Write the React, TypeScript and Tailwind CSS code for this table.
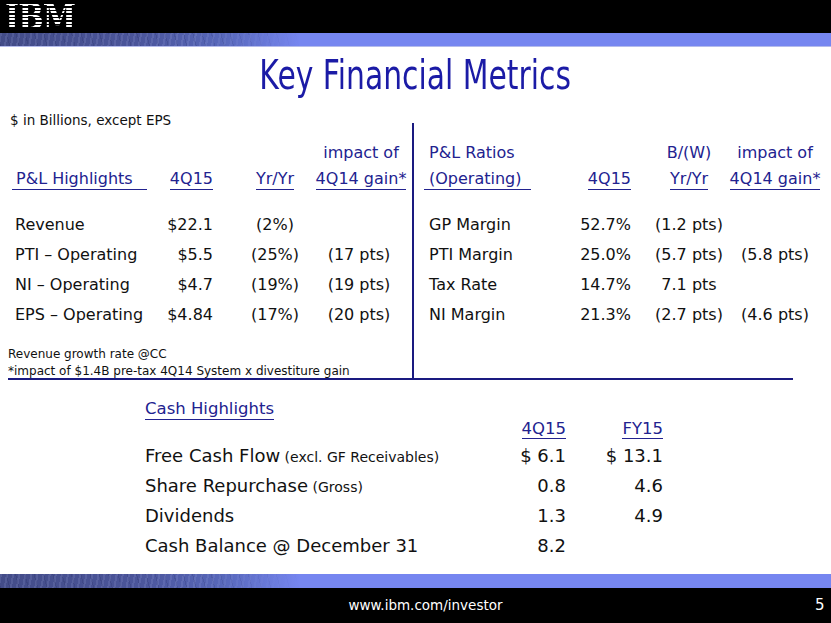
const font = { fontFamily: '"DejaVu Sans", Verdana, sans-serif' };

const plRows = [
  ["Revenue", "$22.1", "(2%)", ""],
  ["PTI \u2013 Operating", "$5.5", "(25%)", "(17 pts)"],
  ["NI \u2013 Operating", "$4.7", "(19%)", "(19 pts)"],
  ["EPS \u2013 Operating", "$4.84", "(17%)", "(20 pts)"],
];

const ratioRows = [
  ["GP Margin", "52.7%", "(1.2 pts)", ""],
  ["PTI Margin", "25.0%", "(5.7 pts)", "(5.8 pts)"],
  ["Tax Rate", "14.7%", "7.1 pts", ""],
  ["NI Margin", "21.3%", "(2.7 pts)", "(4.6 pts)"],
];

const cashRows: [string, string, string, string][] = [
  ["Free Cash Flow", "(excl. GF Receivables)", "$ 6.1", "$ 13.1"],
  ["Share Repurchase", "(Gross)", "0.8", "4.6"],
  ["Dividends", "", "1.3", "4.9"],
  ["Cash Balance @ December 31", "", "8.2", ""],
];

// blue band under the header and above the footer
const Band = ({ top }: { top?: boolean }) => (
  <div className={`h-[14px] shrink-0 flex bg-[#7686f0] ${top ? "border-b border-[#b4bbec]" : ""}`}>
    <div className="w-[300px] h-full bg-[linear-gradient(to_right,#434c88_0%,#4b559a_45%,#5868bb_75%,#7686f0_100%)]">
      <div className="w-full h-full [mask-image:linear-gradient(to_right,black_0%,black_65%,transparent_100%)] bg-[repeating-linear-gradient(100deg,rgba(200,208,255,0.12)_0px,rgba(200,208,255,0.12)_2px,transparent_2px,transparent_6px),repeating-linear-gradient(75deg,rgba(20,25,70,0.15)_0px,rgba(20,25,70,0.15)_1px,transparent_1px,transparent_9px)]"></div>
    </div>
  </div>
);

const u = "inline-block leading-[20px] border-b border-[#22228f]";

const App = () => {
  return (
    <div className="w-[831px] h-[623px] bg-white flex flex-col overflow-hidden text-[#111]" style={font}>
      {/* header */}
      <div className="h-[33px] bg-black pl-[5px] shrink-0 flex items-center">
        <span
          className="block origin-left scale-x-[0.86] text-[35px] leading-[31px] font-bold tracking-[-1px] text-transparent bg-clip-text bg-[repeating-linear-gradient(to_bottom,#fff_0px,#fff_2px,#000_2px,#000_3.5px)]"
          style={{ fontFamily: '"DejaVu Serif", "Liberation Serif", serif' }}
        >
          IBM
        </span>
      </div>
      <Band top />

      <div className="flex-1 flex flex-col">
        <div className="mt-[4px] h-[48px] flex justify-center">
          <h1 className="text-[40px] leading-[48px] text-[#1b1ba6] scale-x-[0.745] whitespace-nowrap">
            Key Financial Metrics
          </h1>
        </div>
        <div className="mt-[12px] mb-[-6px] pl-[10px] text-[13.5px] leading-[18px]">$ in Billions, except EPS</div>

        {/* tables */}
        <div className="flex h-[255px] text-[16px]">
          <div className="w-[414px] border-r-2 border-[#1a1a80] pl-[15px] pt-[18px]">
            <div className="grid grid-cols-[140px_58px_100px_96px] h-[24px] leading-[24px] text-[#22228f]">
              <div></div>
              <div></div>
              <div></div>
              <div className="text-center">impact of</div>
            </div>
            <div className="grid grid-cols-[140px_58px_100px_96px] h-[24px] pt-[2px] text-[#22228f]">
              <div>
                <span className={`${u} ml-[-3px] pl-[4px] pr-[14px]`}>P&amp;L Highlights</span>
              </div>
              <div className="text-right">
                <span className={u}>4Q15</span>
              </div>
              <div className="text-center pl-[24px]">
                <span className={u}>Yr/Yr</span>
              </div>
              <div className="text-center">
                <span className={u}>4Q14 gain*</span>
              </div>
            </div>
            <div className="mt-[21px]">
              {plRows.map((r) => (
                <div key={r[0]} className="grid grid-cols-[140px_58px_100px_96px] h-[30px] leading-[30px]">
                  <div className="whitespace-nowrap">{r[0]}</div>
                  <div className="text-right">{r[1]}</div>
                  <div className="text-center pl-[24px]">{r[2]}</div>
                  <div className="text-center pr-[4px]">{r[3]}</div>
                </div>
              ))}
            </div>
            <div className="mt-[16px] ml-[-7px] text-[12px] leading-[17px] whitespace-nowrap">
              <div>Revenue growth rate @CC</div>
              <div>*impact of $1.4B pre-tax 4Q14 System x divestiture gain</div>
            </div>
          </div>

          <div className="pl-[15px] pt-[18px]">
            <div className="grid grid-cols-[130px_72px_98px_92px] h-[24px] leading-[24px] text-[#22228f]">
              <div className="whitespace-nowrap">P&amp;L Ratios</div>
              <div></div>
              <div className="text-center pl-[18px]">B/(W)</div>
              <div className="text-center">impact of</div>
            </div>
            <div className="grid grid-cols-[130px_72px_98px_92px] h-[24px] pt-[2px] text-[#22228f]">
              <div>
                <span className={`${u} ml-[-5px] pl-[5px] pr-[10px]`}>(Operating)</span>
              </div>
              <div className="text-right">
                <span className={u}>4Q15</span>
              </div>
              <div className="text-center pl-[18px]">
                <span className={u}>Yr/Yr</span>
              </div>
              <div className="text-center">
                <span className={u}>4Q14 gain*</span>
              </div>
            </div>
            <div className="mt-[21px]">
              {ratioRows.map((r) => (
                <div key={r[0]} className="grid grid-cols-[130px_72px_98px_92px] h-[30px] leading-[30px]">
                  <div className="whitespace-nowrap">{r[0]}</div>
                  <div className="text-right">{r[1]}</div>
                  <div className="text-center pl-[18px] whitespace-nowrap">{r[2]}</div>
                  <div className="text-center whitespace-nowrap">{r[3]}</div>
                </div>
              ))}
            </div>
          </div>
        </div>
        <div className="ml-[8px] w-[785px] h-[2px] bg-[#1a1a80]"></div>

        {/* cash */}
        <div className="pl-[145px] mt-[19px]">
          <div className="w-fit text-[16.5px] leading-[20px] text-[#22228f] border-b border-[#22228f]">
            Cash Highlights
          </div>
          <div className="grid grid-cols-[340px_81px_97px] h-[19px] leading-[18px] text-[16.5px] text-[#22228f]">
            <div></div>
            <div className="text-right">
              <span className="inline-block leading-[18px] border-b border-[#22228f]">4Q15</span>
            </div>
            <div className="text-right">
              <span className="inline-block leading-[18px] border-b border-[#22228f]">FY15</span>
            </div>
          </div>
          <div className="mt-[2px] text-[18px]">
            {cashRows.map((r) => (
              <div key={r[0]} className="grid grid-cols-[340px_81px_97px] h-[30px] leading-[30px]">
                <div className="whitespace-nowrap">
                  {r[0]}
                  {r[1] && <span className="text-[14px]"> {r[1]}</span>}
                </div>
                <div className="text-right whitespace-pre">{r[2]}</div>
                <div className="text-right whitespace-pre">{r[3]}</div>
              </div>
            ))}
          </div>
        </div>
      </div>

      {/* footer */}
      <Band />
      <div className="h-[35px] bg-black text-white flex items-center shrink-0 text-[13.5px]">
        <div className="flex-1 text-center pl-[36px]">www.ibm.com/investor</div>
        <div className="w-[16px] text-[15px]">5</div>
      </div>
    </div>
  );
};

export default App;
